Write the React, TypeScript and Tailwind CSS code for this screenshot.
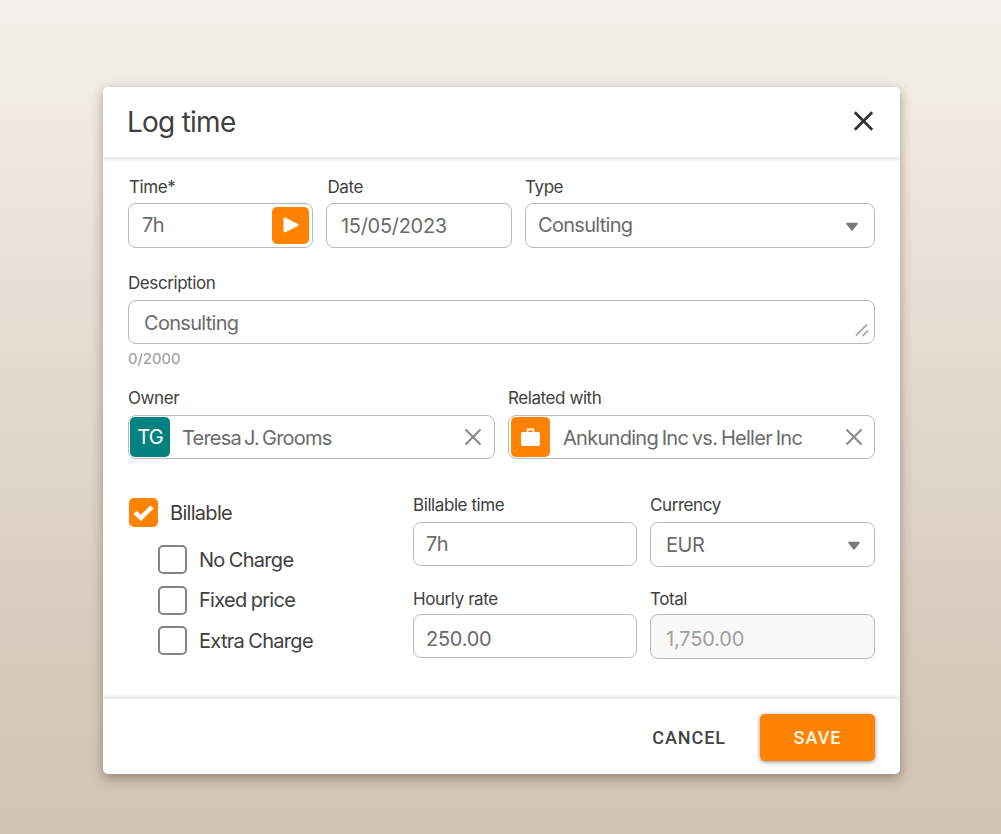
import React from "react";
import clsx from "clsx";

type FieldProps = {
  label: string;
  className?: string;
  labelClassName?: string;
  boxClassName?: string;
  children: React.ReactNode;
};

const Field: React.FC<FieldProps> = ({
  label,
  className,
  labelClassName,
  boxClassName = "mt-[7px] h-11 pl-3 tracking-[-0.5px]",
  children,
}) => {
  return (
    <div className={className}>
      <p
        className={clsx(
          "h-5 text-[17px] leading-[21px] tracking-[-0.42px] text-[#404040] whitespace-nowrap",
          labelClassName
        )}
      >
        {label}
      </p>
      <div
        className={clsx(
          "flex items-center rounded-lg border border-[#b9b9b9] text-xl leading-6 text-[#6b6b6b] whitespace-nowrap",
          boxClassName
        )}
      >
        {children}
      </div>
    </div>
  );
};

const Caret = ({ className }: { className?: string }) => (
  <svg width="14" height="10" viewBox="0 0 14 10" className={className}>
    <path
      d="M1.8 1.5h10.4L7 8z"
      fill="#7a7a7a"
      stroke="#7a7a7a"
      strokeWidth="1.4"
      strokeLinejoin="round"
    />
  </svg>
);

const Clear = ({ className }: { className?: string }) => (
  <svg width="18" height="18" viewBox="0 0 18 18" className={className}>
    <path d="M1.5 1.5l15 15M16.5 1.5l-15 15" stroke="#8c8c8c" strokeWidth="2.2" />
  </svg>
);

type CheckboxProps = {
  label: string;
  checked?: boolean;
  className?: string;
};

const Checkbox: React.FC<CheckboxProps> = ({ label, checked, className }) => {
  return (
    <div className={clsx("flex items-center gap-3", className)}>
      {checked ? (
        <div className="flex h-[29px] w-[29px] items-center justify-center rounded-[5px] bg-[#ff8200]">
          <svg width="21" height="18" viewBox="0 0 21 18">
            <path d="M2 8.4l6 5.5L19 3" fill="none" stroke="#fff" strokeWidth="4.4" />
          </svg>
        </div>
      ) : (
        <div className="h-[29px] w-[29px] rounded-[5px] border-[2.5px] border-[#858585]" />
      )}
      <p className="text-xl leading-6 tracking-[-0.7px] text-[#404040] [word-spacing:-0.8px] whitespace-nowrap">
        {label}
      </p>
    </div>
  );
};

const App = () => {
  return (
    <div className="h-[834px] w-[1001px] bg-[linear-gradient(180deg,#f4f1ec_0%,#f1ece4_11%,#efe7e0_18%,#e3dacf_45%,#d7cabb_80%,#d1c4b2_100%)] pt-[87px] pl-[103px] font-['Inter','Liberation_Sans',sans-serif]">
      <div className="flex h-[687px] w-[797px] flex-col overflow-hidden rounded-[5px] bg-white shadow-[0_4px_12px_rgba(60,45,30,0.42)]">
        <header className="flex h-[70px] shrink-0 items-center justify-between pr-[26px] pl-6 shadow-[0_1px_5px_1px_rgba(0,0,0,0.14)]">
          <h1 className="text-[28px] leading-9 tracking-[-0.75px] text-[#404040]">Log time</h1>
          <button>
            <svg width="21" height="20" viewBox="0 0 21 20" className="mb-[3px]">
              <path d="M1.8 1.3l17.4 17.4M19.2 1.3L1.8 18.7" stroke="#333" strokeWidth="2.7" />
            </svg>
          </button>
        </header>

        <main className="flex-1 px-[25px] pt-5">
          <div className="flex">
            <Field
              label="Time*"
              className="w-[185px]"
              labelClassName="pl-px"
              boxClassName="mt-1.5 h-[45px] justify-between pl-[13px] pr-[3px] tracking-[-0.5px]"
            >
              <span className="pb-px">7h</span>
              <button className="mb-px flex h-[37px] w-[37px] items-center justify-center rounded-[5px] bg-[#ff8200]">
                <svg width="16" height="16" viewBox="0 0 16 16">
                  <path
                    d="M1.5 1.5v13L14.5 8z"
                    fill="#fff"
                    stroke="#fff"
                    strokeWidth="2"
                    strokeLinejoin="round"
                  />
                </svg>
              </button>
            </Field>
            <Field
              label="Date"
              className="ml-[13px] w-[186px]"
              labelClassName="pl-[1.5px]"
              boxClassName="mt-1.5 h-[45px] pl-[14px] pt-px tracking-[-0.3px]"
            >
              15/05/2023
            </Field>
            <Field
              label="Type"
              className="ml-[13px] w-[350px]"
              boxClassName="mt-1.5 h-[45px] justify-between pl-3 pr-[15px] tracking-[-0.7px]"
            >
              <span className="pb-px">Consulting</span>
              <Caret className="mt-[3px]" />
            </Field>
          </div>

          <Field
            label="Description"
            className="mt-[25px]"
            boxClassName="mt-[7px] h-11 justify-between pl-[15px] pr-[5px] tracking-[-0.7px]"
          >
            <span className="pt-0.5">Consulting</span>
            <svg width="14" height="14" viewBox="0 0 14 14" className="mt-[15px]">
              <path d="M1 12.5L12 1.5M7.5 13L13 7.5" stroke="#adadad" strokeWidth="1.8" />
            </svg>
          </Field>
          <p className="mt-1 h-5 text-[15px] leading-[21px] text-[#969696]">0/2000</p>

          <div className="mt-5 flex gap-[13px]">
            <Field
              label="Owner"
              className="w-[367px]"
              boxClassName="mt-[7px] h-11 pl-px pr-3 tracking-[-0.8px] [word-spacing:-1.7px]"
            >
              <div className="flex h-10 w-10 items-center justify-center rounded-[5px] bg-[#028181] text-white">
                TG
              </div>
              <span className="ml-3 pt-0.5">Teresa J. Grooms</span>
              <Clear className="ml-auto" />
            </Field>
            <Field
              label="Related with"
              className="w-[367px]"
              boxClassName="mt-[7px] h-11 pl-0.5 pr-[11px] tracking-[-0.72px] [word-spacing:-1.2px]"
            >
              <div className="flex h-10 w-[39px] items-center justify-center rounded-[5px] bg-[#ff8200]">
                <svg width="19" height="18" viewBox="0 0 19 18">
                  <path
                    d="M6.6 5V1.3h5.8V5"
                    fill="none"
                    stroke="#fff"
                    strokeWidth="1.8"
                    strokeLinejoin="round"
                  />
                  <rect y="4" width="19" height="14" rx="2" fill="#fff" />
                </svg>
              </div>
              <span className="ml-[13px] pt-0.5">Ankunding Inc vs. Heller Inc</span>
              <Clear className="ml-auto" />
            </Field>
          </div>

          <div className="mt-9 flex">
            <div className="w-[285px] pt-[3px] pl-px">
              <Checkbox label="Billable" checked />
              <div className="mt-[18px] ml-[29px] flex flex-col gap-[11.5px]">
                <Checkbox label="No Charge" />
                <Checkbox label="Fixed price" />
                <Checkbox label="Extra Charge" />
              </div>
            </div>
            <div className="grid grid-cols-[224px_225px] content-start gap-x-[13px] gap-y-[22px]">
              <Field label="Billable time">7h</Field>
              <Field
                label="Currency"
                boxClassName="mt-[7px] h-[45px] justify-between pl-[15px] pr-[13px] tracking-[-0.5px]"
              >
                <span className="pt-px">EUR</span>
                <Caret className="mt-[3px]" />
              </Field>
              <Field
                label="Hourly rate"
                boxClassName="mt-[5px] h-11 pt-[5px] pl-3 tracking-[-0.25px]"
              >
                250.00
              </Field>
              <Field
                label="Total"
                boxClassName="mt-[5px] h-[45px] bg-[#f8f8f8] pt-1 pl-[15px] tracking-[-0.15px] text-[#a0a0a0]"
              >
                1,750.00
              </Field>
            </div>
          </div>
        </main>

        <footer className="flex h-[75px] shrink-0 items-center justify-end pt-px pr-[25px] font-['Roboto',sans-serif] text-lg font-medium shadow-[0_-1px_5px_1px_rgba(0,0,0,0.14)]">
          <button className="mr-[34px] pt-px tracking-[0.95px] text-[#444444]">CANCEL</button>
          <button className="h-[47px] w-[115px] rounded-[5px] bg-[#ff8200] pt-px tracking-[1px] text-[#fff8e8] shadow-[0_1px_4px_rgba(0,0,0,0.45)]">
            SAVE
          </button>
        </footer>
      </div>
    </div>
  );
};

export default App;
